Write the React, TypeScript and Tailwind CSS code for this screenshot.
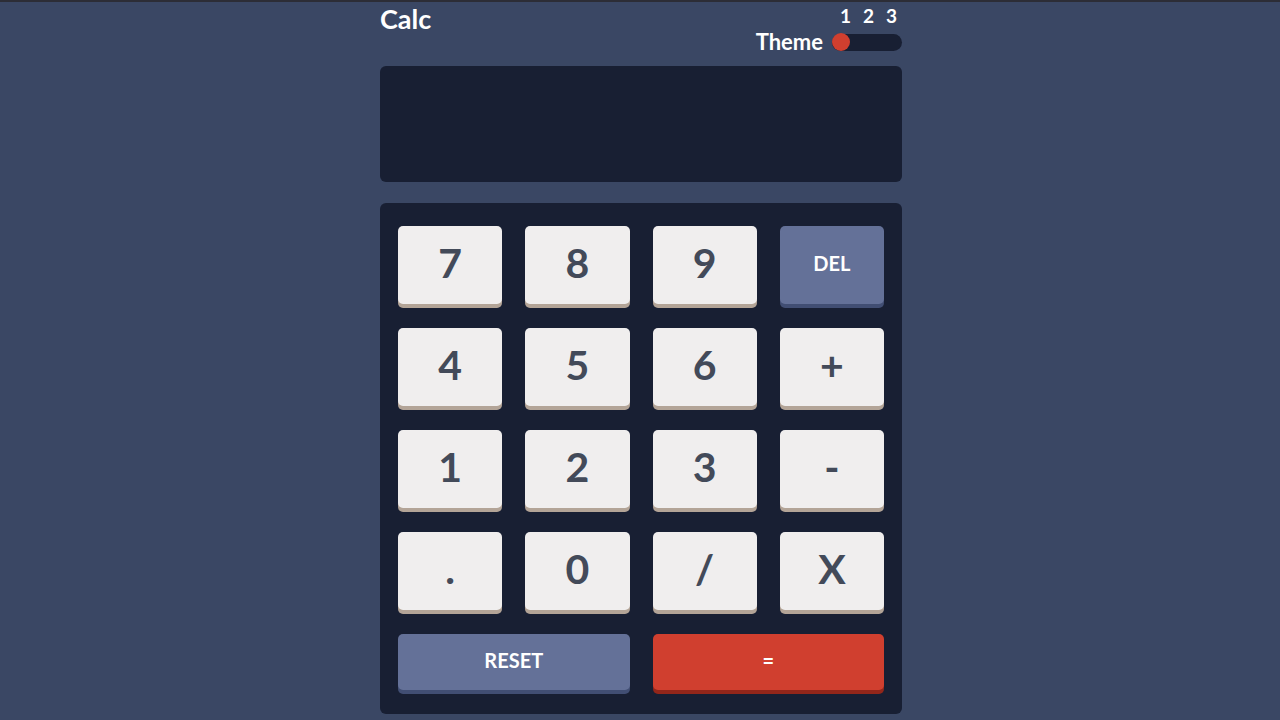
import React from "react";

type Key = { label: string; kind?: "num" | "del" };

const keys: Key[] = [
  { label: "7" },
  { label: "8" },
  { label: "9" },
  { label: "DEL", kind: "del" },
  { label: "4" },
  { label: "5" },
  { label: "6" },
  { label: "+" },
  { label: "1" },
  { label: "2" },
  { label: "3" },
  { label: "-" },
  { label: "." },
  { label: "0" },
  { label: "/" },
  { label: "X" },
];

function KeyButton({ item }: { item: Key }) {
  if (item.kind === "del") {
    return (
      <button className="h-[78px] rounded-[5px] bg-[#647198] shadow-[0_4px_0_#414e73] text-white text-[20px] font-bold pb-[4px]">
        {item.label}
      </button>
    );
  }
  return (
    <button className="h-[78px] rounded-[5px] bg-[#f0eeee] shadow-[0_4px_0_#b3a497] text-[#434a59] text-[41px] font-bold leading-none pb-[6px]">
      {item.label}
    </button>
  );
}

export default function App() {
  return (
    <div
      className="min-h-screen w-full bg-[#3a4764] text-white"
      style={{ fontFamily: "Lato, 'Noto Sans', sans-serif" }}
    >
      <div className="h-[2px] bg-[#2c2d36]" />
      <div className="mx-auto w-[524px] pl-[2px]">
        <div className="flex justify-between h-[64px]">
          <div className="text-[27px] font-bold leading-none pt-[3px]">Calc</div>
          <div className="flex flex-col items-end">
            <div className="flex gap-[12px] text-[19px] font-bold leading-none pt-[4px] pr-[5px]">
              <span>1</span>
              <span>2</span>
              <span>3</span>
            </div>
            <div className="flex items-center gap-[9px] mt-[6px]">
              <span className="text-[22px] font-bold leading-none">Theme</span>
              <div className="w-[70px] h-[17px] rounded-full bg-[#181f33] flex items-center">
                <div className="w-[18px] h-[18px] rounded-full bg-[#d03f2f]" />
              </div>
            </div>
          </div>
        </div>

        <div className="h-[116px] rounded-[6px] bg-[#181f33]" />

        <div className="mt-[21px] rounded-[6px] bg-[#181f33] px-[18px] pt-[23px] pb-[24px]">
          <div className="grid grid-cols-4 gap-x-[23px] gap-y-[24px]">
            {keys.map((k) => (
              <KeyButton key={k.label} item={k} />
            ))}
          </div>
          <div className="grid grid-cols-2 gap-x-[23px] mt-[24px]">
            <button className="h-[56px] rounded-[5px] bg-[#647198] shadow-[0_4px_0_#414e73] text-white text-[20px] font-bold pb-[4px]">
              RESET
            </button>
            <button className="h-[56px] rounded-[5px] bg-[#d03f2f] shadow-[0_4px_0_#93261a] text-white text-[20px] font-bold pb-[4px]">
              =
            </button>
          </div>
        </div>
      </div>
    </div>
  );
}
